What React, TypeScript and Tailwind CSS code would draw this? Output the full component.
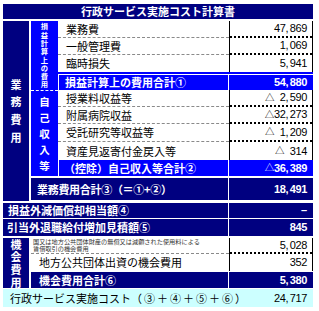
import React from "react";

const JP = "font-['Noto_Sans_CJK_JP','Noto_Sans',sans-serif]";
const NUMF = "font-['Liberation_Sans',Arial,sans-serif]";

function Num({ n, tri, pad, bold }: { n: string; tri?: boolean; pad?: boolean; bold?: boolean }) {
  const parts = n.split(",");
  return (
    <span className={`${NUMF} text-[11px] tracking-[-0.35px] leading-none flex items-center ${bold ? "font-bold" : ""}`}>
      {tri && <span className={`${JP} text-[9.5px] font-normal`}>△</span>}
      {pad && <span className="inline-block w-[5.5px]" />}
      {parts.map((p, i) => (
        <React.Fragment key={i}>
          {i > 0 && <span className="mr-[1.5px]">,</span>}
          {p}
        </React.Fragment>
      ))}
    </span>
  );
}

function VChars({ text, cls }: { text: string; cls: string }) {
  return (
    <div className="flex flex-col items-center">
      {Array.from(text).map((c, i) => (
        <span key={i} className={cls}>
          {c}
        </span>
      ))}
    </div>
  );
}

function WRow({
  label,
  value,
  h,
  line,
}: {
  label: React.ReactNode;
  value: React.ReactNode;
  h: string;
  line?: boolean;
}) {
  return (
    <div className={`flex ${h}`}>
      <div className="flex-1 flex flex-col min-w-0">
        <div className="flex-1 flex items-center pl-[8px] text-[11px] text-black leading-none">{label}</div>
        {line && <div className="border-t border-dashed border-[#8a8a8a]" />}
      </div>
      <div className="w-[84px] flex flex-col border-l border-r border-black">
        <div className="flex-1 flex items-center justify-end pr-[5px] text-black">{value}</div>
        {line && <div className="border-t-2 border-dotted border-black" />}
      </div>
    </div>
  );
}

function ColorRow({
  label,
  value,
  h,
  bg,
  pl,
  ml,
}: {
  label: React.ReactNode;
  value: React.ReactNode;
  h: string;
  bg: string;
  pl: string;
  ml?: string;
}) {
  return (
    <div className={`flex gap-[1px] ${h} ${ml ?? ""}`}>
      <div className={`flex-1 flex items-center ${pl} ${bg} text-white font-bold text-[11px] leading-none whitespace-nowrap`}>
        {label}
      </div>
      <div className={`w-[84px] flex items-center justify-end pr-[6px] ${bg} text-white`}>{value}</div>
    </div>
  );
}

export default function App() {
  return (
    <div className={`w-[319px] h-[311px] bg-white pt-[4px] pl-[3px] ${JP}`}>
      <div className="w-[310px] flex flex-col">
        {/* Title */}
        <div className="h-[15px] bg-[#000080] flex items-center justify-center text-white font-bold text-[11px] leading-none">
          行政サービス実施コスト計算書
        </div>

        {/* 業務費用 section */}
        <div className="mt-[2px] flex h-[180px]">
          <div className="w-[26px] bg-[#000080] flex items-center justify-center">
            <VChars text="業務費用" cls="text-white font-bold text-[11px] leading-[17.6px]" />
          </div>
          <div className="w-[282px] ml-[2px] flex flex-col">
            <div className="flex h-[155px]">
              <div className="w-[27px] flex flex-col">
                <div className="h-[69px] bg-[#0000ff] flex items-center justify-center">
                  <VChars text="損益計算上の費用" cls="block h-[8.3px] text-white font-bold text-[7.3px] leading-[8.3px]" />
                </div>
                <div className="h-[86px] bg-[#0000ff] border-t border-dashed border-white flex items-center justify-center">
                  <VChars text="自己収入等" cls="text-white font-bold text-[10.5px] leading-[16px]" />
                </div>
              </div>
              <div className="w-[255px] flex flex-col">
                <WRow h="h-[17px]" line label="業務費" value={<Num n="47,869" />} />
                <WRow h="h-[17px]" line label="一般管理費" value={<Num n="1,069" />} />
                <WRow h="h-[17px]" label="臨時損失" value={<Num n="5,941" />} />
                <div className="h-[18px] flex flex-col">
                  <div className="h-[2px] bg-[#0000ff]" />
                  <div className="h-[1px]" />
                  <ColorRow
                    h="h-[15px]"
                    ml="ml-[1px]"
                    bg="bg-[#0000ff]"
                    pl="pl-[6px]"
                    label="損益計算上の費用合計①"
                    value={<Num n="54,880" bold />}
                  />
                </div>
                <WRow h="h-[17px]" line label="授業料収益等" value={<Num n="2,590" tri pad />} />
                <WRow h="h-[17px]" line label="附属病院収益" value={<Num n="32,273" tri />} />
                <WRow h="h-[18px]" line label="受託研究等収益等" value={<Num n="1,209" tri pad />} />
                <WRow h="h-[18px]" label="資産見返寄付金戻入等" value={<Num n="314" tri pad />} />
                <ColorRow
                  h="h-[16px]"
                  ml="ml-[1px]"
                  bg="bg-[#0000ff]"
                  pl="pl-[5px]"
                  label="（控除）自己収入等合計②"
                  value={<Num n="36,389" tri bold />}
                />
              </div>
            </div>
            <div className="mt-[2px]">
              <ColorRow
                h="h-[22px]"
                bg="bg-[#000080]"
                pl="pl-[6px]"
                label={<span className="tracking-[-0.3px]">業務費用合計③（＝①+②）</span>}
                value={<Num n="18,491" bold />}
              />
            </div>
          </div>
        </div>

        <div className="mt-[2px]">
          <ColorRow
            h="h-[15px]"
            bg="bg-[#000080]"
            pl="pl-[5px]"
            label="損益外減価償却相当額④"
            value={<span className={`${NUMF} font-bold text-[11px] leading-none`}>–</span>}
          />
        </div>
        <div className="mt-[1px]">
          <ColorRow
            h="h-[17px]"
            bg="bg-[#000080]"
            pl="pl-[4px]"
            label="引当外退職給付増加見積額⑤"
            value={<Num n="845" bold />}
          />
        </div>

        {/* 機会費用 section */}
        <div className="mt-[2px] flex h-[50px]">
          <div className="w-[26px] bg-[#000080] flex items-center justify-center">
            <VChars text="機会費用" cls="text-white font-bold text-[11px] leading-[12.7px]" />
          </div>
          <div className="w-[282px] ml-[2px] flex flex-col">
            <div className="flex h-[16px]">
              <div className="flex-1 flex flex-col min-w-0">
                <div className="flex-1 flex flex-col justify-center pl-[2px] text-[6.2px] text-[#333] whitespace-nowrap">
                  <span className="block h-[6.5px] leading-[6.5px]">国又は地方公共団体財産の無償又は減額された使用料による</span>
                  <span className="block h-[6.5px] leading-[6.5px]">賃借取引の機会費用</span>
                </div>
                <div className="border-t border-dashed border-[#8a8a8a]" />
              </div>
              <div className="w-[84px] flex flex-col border-l border-r border-black">
                <div className="flex-1 flex items-center justify-end pr-[5px] text-black">
                  <Num n="5,028" />
                </div>
                <div className="border-t-2 border-dotted border-black" />
              </div>
            </div>
            <WRow h="h-[17px]" label="地方公共団体出資の機会費用" value={<Num n="352" />} />
            <div className="mt-[1px]">
              <ColorRow
                h="h-[16px]"
                bg="bg-[#000080]"
                pl="pl-[8px]"
                label="機会費用合計⑥"
                value={<Num n="5,380" bold />}
              />
            </div>
          </div>
        </div>

        {/* total */}
        <div className="mt-[1px] h-[18px] bg-[#ccffff] flex">
          <div className="flex-1 flex items-center pl-[7px] text-[11px] text-black leading-none whitespace-nowrap">
            行政サービス実施コスト<span className="tracking-[2px]">（③＋④＋⑤＋⑥）</span>
          </div>
          <div className="w-[84px] flex items-center justify-end pr-[6px] text-black">
            <Num n="24,717" />
          </div>
        </div>
      </div>
    </div>
  );
}
